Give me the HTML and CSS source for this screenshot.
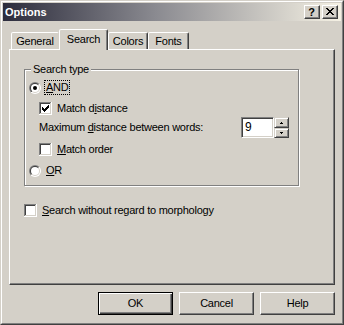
FILE: index.html
```html
<!DOCTYPE html>
<html>
<head>
<meta charset="utf-8">
<link rel="stylesheet" href="styles.css">
</head>
<body>
<div class="window">
  <div class="frame">
    <div class="titlebar">
      <span class="title">Options</span>
      <div class="caps">
        <div class="cap cap-help">?</div>
        <div class="cap cap-close">
          <svg width="8" height="7" viewBox="0 0 8 7" shape-rendering="crispEdges"><path fill="#000" d="M0 0h2v1H0zM6 0h2v1H6zM1 1h2v1H1zM5 1h2v1H5zM2 2h4v1H2zM3 3h2v1H3zM2 4h4v1H2zM1 5h2v1H1zM5 5h2v1H5zM0 6h2v1H0zM6 6h2v1H6z"/></svg>
        </div>
      </div>
    </div>
    <div class="body">
      <div class="tabs">
        <div class="tab t-general">General</div>
        <div class="tab sel t-search">Search</div>
        <div class="tab t-colors">Colors</div>
        <div class="tab t-fonts">Fonts</div>
      </div>
      <div class="panel">
        <div class="group">
          <div class="legend">Search type</div>
          <div class="opt r-and">
            <svg class="radio" width="12" height="12" viewBox="0 0 12 12">
              <defs>
                <linearGradient id="ro" x1="0" y1="0" x2="1" y2="1"><stop offset="0.5" stop-color="#808080"/><stop offset="0.5" stop-color="#ffffff"/></linearGradient>
                <linearGradient id="ri" x1="0" y1="0" x2="1" y2="1"><stop offset="0.5" stop-color="#404040"/><stop offset="0.5" stop-color="#d4d0c8"/></linearGradient>
              </defs>
              <circle cx="6" cy="6" r="6" fill="url(#ro)"/>
              <circle cx="6" cy="6" r="5" fill="url(#ri)"/>
              <circle cx="6" cy="6" r="4" fill="#fff"/>
              <circle cx="6" cy="6" r="2" fill="#000"/>
            </svg>
            <span class="rlbl focus"><u>A</u>ND</span>
          </div>
          <div class="opt chk r-dist">
            <svg class="cb" width="13" height="13" viewBox="0 0 13 13" shape-rendering="crispEdges">
              <rect width="13" height="13" fill="#fff"/>
              <path d="M0 0h12v1H1v11H0z" fill="#808080"/>
              <rect x="1" y="1" width="11" height="11" fill="#d4d0c8"/>
              <path d="M1 1h10v1H2v9H1z" fill="#404040"/>
              <rect x="2" y="2" width="9" height="9" fill="#fff"/>
              <path fill="#000" d="M3 5h1v3H3zM4 6h1v3H4zM5 7h1v3H5zM6 6h1v3H6zM7 5h1v3H7zM8 4h1v3H8zM9 3h1v3H9z"/>
            </svg>
            <span class="clbl">Match d<u>i</u>stance</span>
          </div>
          <div class="maxrow">
            <span class="maxlbl">Maximum <u>d</u>istance between words:</span>
            <div class="edit">9</div>
            <div class="spin">
              <div class="sbtn up"><svg width="3" height="2" viewBox="0 0 3 2" shape-rendering="crispEdges"><path fill="#000" d="M1 0h1v1H1zM0 1h3v1H0z"/></svg></div>
              <div class="sbtn down"><svg width="3" height="2" viewBox="0 0 3 2" shape-rendering="crispEdges"><path fill="#000" d="M0 0h3v1H0zM1 1h1v1H1z"/></svg></div>
            </div>
          </div>
          <div class="opt chk r-order">
            <svg class="cb" width="13" height="13" viewBox="0 0 13 13" shape-rendering="crispEdges">
              <rect width="13" height="13" fill="#fff"/>
              <path d="M0 0h12v1H1v11H0z" fill="#808080"/>
              <rect x="1" y="1" width="11" height="11" fill="#d4d0c8"/>
              <path d="M1 1h10v1H2v9H1z" fill="#404040"/>
              <rect x="2" y="2" width="9" height="9" fill="#fff"/>
            </svg>
            <span class="clbl"><u>M</u>atch order</span>
          </div>
          <div class="opt r-or">
            <svg class="radio" width="12" height="12" viewBox="0 0 12 12">
              <circle cx="6" cy="6" r="6" fill="url(#ro)"/>
              <circle cx="6" cy="6" r="5" fill="url(#ri)"/>
              <circle cx="6" cy="6" r="4" fill="#fff"/>
            </svg>
            <span class="rlbl"><u>O</u>R</span>
          </div>
        </div>
        <div class="opt chk r-morph">
          <svg class="cb" width="13" height="13" viewBox="0 0 13 13" shape-rendering="crispEdges">
            <rect width="13" height="13" fill="#fff"/>
            <path d="M0 0h12v1H1v11H0z" fill="#808080"/>
            <rect x="1" y="1" width="11" height="11" fill="#d4d0c8"/>
            <path d="M1 1h10v1H2v9H1z" fill="#404040"/>
            <rect x="2" y="2" width="9" height="9" fill="#fff"/>
          </svg>
          <span class="clbl"><u>S</u>earch without regard to morphology</span>
        </div>
      </div>
      <div class="buttons">
        <div class="btn default">OK</div>
        <div class="btn">Cancel</div>
        <div class="btn">Help</div>
      </div>
    </div>
  </div>
</div>
</body>
</html>
```
FILE: styles.css
```css
* { box-sizing: border-box; }
html, body { margin: 0; padding: 0; }
body {
  background: #d4d0c8;
  font-family: "Liberation Sans", Arial, sans-serif;
  font-size: 11px;
  letter-spacing: -0.25px;
  color: #000;
}
u { text-decoration: underline; text-underline-offset: 1px; }

.window {
  width: 344px;
  height: 325px;
  border: 1px solid;
  border-color: #d4d0c8 #404040 #404040 #d4d0c8;
}
.frame {
  height: 100%;
  border: 1px solid;
  border-color: #fff #808080 #808080 #fff;
  padding: 1px;
  display: flex;
  flex-direction: column;
}

.titlebar {
  height: 18px;
  flex: none;
  background: linear-gradient(90deg, #2c2c3c 0%, #8a8a90 45%, #f5f1e4 100%);
  display: flex;
  align-items: center;
  padding: 0 3px 0 2px;
}
.title {
  flex: 1;
  color: #fff;
  font-weight: bold;
  font-size: 11px;
  letter-spacing: 0;
  line-height: 14px;
}
.caps { display: flex; gap: 2px; }
.cap {
  width: 16px;
  height: 14px;
  background: #d4d0c8;
  border: 1px solid;
  border-color: #fff #404040 #404040 #fff;
  box-shadow: inset -1px -1px #808080;
  display: flex;
  align-items: center;
  justify-content: center;
}
.cap-help {
  font-weight: bold;
  font-size: 11px;
  letter-spacing: 0;
  line-height: 12px;
  padding: 0 1px 1px 0;
}
.cap-close { padding: 0 1px 1px 1px; }
.cap-close svg { display: block; }

.body {
  flex: 1;
  display: flex;
  flex-direction: column;
  padding: 8px 6px 7px 6px;
}

.tabs {
  height: 20px;
  flex: none;
  display: flex;
  align-items: flex-end;
  padding-left: 2px;
  position: relative;
  z-index: 1;
}
.tab {
  height: 17px;
  border: 1px solid;
  border-bottom: none;
  border-color: #fff #404040 transparent #fff;
  box-shadow: inset -1px 0 #808080;
  border-radius: 2px 2px 0 0;
  text-align: center;
  line-height: 16px;
  background: #d4d0c8;
}
.t-general { width: 48px; border-right-color: transparent; box-shadow: none; }
.t-search { width: 49px; }
.t-colors { width: 40px; }
.t-fonts { width: 41px; }
.tab.sel {
  height: 21px;
  margin-bottom: -1px;
  padding-top: 1px;
}

.panel {
  flex: 1;
  border: 1px solid;
  border-color: #fff #404040 #404040 #fff;
  box-shadow: inset -1px -1px #808080;
  padding: 19px 0 0 14px;
  display: flex;
  flex-direction: column;
  align-items: flex-start;
}

.group {
  width: 275px;
  height: 117px;
  flex: none;
  border: 1px solid #808080;
  box-shadow: inset 1px 1px #fff, 1px 1px #fff;
  display: flex;
  flex-direction: column;
  align-items: flex-start;
  padding-left: 4px;
}
.legend {
  margin: -7px 0 0 2px;
  padding: 0 2px;
  height: 13px;
  line-height: 13px;
  background: #d4d0c8;
}

.opt {
  display: flex;
  align-items: center;
}
.opt svg { display: block; flex: none; }
.rlbl {
  margin-left: 3px;
  border: 1px dotted transparent;
  padding: 0 1px;
  line-height: 13px;
}
.rlbl.focus { border-color: #000; }
.clbl {
  margin-left: 5px;
  line-height: 17px;
}
.chk { height: 17px; }
.chk .cb { margin-left: 10px; }

.r-and { height: 15px; margin-top: 4px; }
.r-dist { margin-top: 5px; }
.r-order { margin-top: 3px; }
.r-or { height: 15px; margin-top: 5px; }
.r-morph { margin-top: 16px; }
.r-morph .cb { margin-left: 0; }

.maxrow {
  display: flex;
  align-items: center;
  height: 21px;
  padding-left: 10px;
}
.maxlbl {
  width: 202px;
  line-height: 21px;
}
.edit {
  width: 33px;
  height: 21px;
  background: #fff;
  border: 1px solid;
  border-color: #808080 #fff #fff #808080;
  box-shadow: inset 1px 1px #404040, inset -1px -1px #d4d0c8;
  padding-left: 3px;
  line-height: 19px;
  font-size: 12px;
}
.spin {
  width: 15px;
  height: 21px;
  display: flex;
  flex-direction: column;
}
.sbtn {
  background: #d4d0c8;
  border: 1px solid;
  border-color: #d4d0c8 #404040 #404040 #d4d0c8;
  box-shadow: inset 1px 1px #fff, inset -1px -1px #808080;
  display: flex;
  align-items: center;
  justify-content: center;
}
.sbtn.up { height: 11px; }
.sbtn.down { height: 10px; }
.sbtn svg { display: block; }

.buttons {
  flex: none;
  display: flex;
  justify-content: flex-end;
  gap: 6px;
  margin-top: 7px;
}
.btn {
  width: 75px;
  height: 23px;
  border: 1px solid;
  border-color: #fff #404040 #404040 #fff;
  box-shadow: inset -1px -1px #808080;
  display: flex;
  align-items: center;
  justify-content: center;
  line-height: 13px;
}
.btn.default {
  border-color: #000;
  box-shadow: inset 1px 1px #fff, inset -1px -1px #404040, inset -2px -2px #808080;
}
```
